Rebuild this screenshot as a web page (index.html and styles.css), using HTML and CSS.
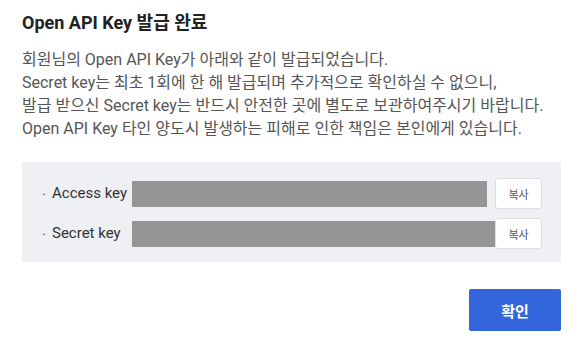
FILE: index.html
```html
<!DOCTYPE html>
<html lang="ko">
<head>
  <meta charset="UTF-8" />
  <title>Open API Key 발급 완료</title>
  <link rel="stylesheet" href="styles.css">
</head>
<body>
  <div class="modal">
    <h2>Open API Key 발급 완료</h2>
    <p class="desc">
      회원님의 Open API Key가 아래와 같이 발급되었습니다.<br>
      Secret key는 최초 1회에 한 해 발급되며 추가적으로 확인하실 수 없으니,<br>
      발급 받으신 Secret key는 반드시 안전한 곳에 별도로 보관하여주시기 바랍니다.<br>
      Open API Key 타인 양도시 발생하는 피해로 인한 책임은 본인에게 있습니다.
    </p>

    <div class="key-box">
      <div class="key-row">
        <span class="key-label">Access key</span>
        <div class="key-value"></div>
        <button type="button" class="btn-copy">복사</button>
      </div>
      <div class="key-row">
        <span class="key-label">Secret key</span>
        <div class="key-value wide"></div>
        <button type="button" class="btn-copy">복사</button>
      </div>
    </div>

    <div class="actions">
      <button type="button" class="btn-ok">확인</button>
    </div>
  </div>
</body>
</html>
```

FILE: styles.css
```css
body {
  margin: 0;
  background: #fff;
  font-family: Roboto, "Noto Sans CJK KR", sans-serif;
}
.modal {
  padding: 10px 19px 0 22px;
}
.modal h2 {
  margin: 0;
  font-size: 18px;
  line-height: 26px;
  font-weight: 700;
  color: #222;
}
.desc {
  margin: 12px 0 0;
  font-size: 16px;
  line-height: 23px;
  color: #555;
}
.key-box {
  margin-top: 22px;
  background: #eef0f3;
  padding: 16px 19px 13px 20px;
  display: flex;
  flex-direction: column;
  gap: 9px;
}
.key-row {
  display: flex;
  align-items: center;
  height: 31px;
}
.key-label {
  width: 90px;
  flex: none;
  font-size: 15px;
  color: #333;
}
.key-label::before {
  content: "·";
  display: inline-block;
  width: 10px;
  color: #555;
  vertical-align: -2px;
}
.key-value {
  flex: 1;
  height: 26px;
  background: #959595;
  margin-right: 8px;
}
.key-value.wide {
  margin-right: 0;
}
.btn-copy {
  flex: none;
  width: 47px;
  height: 31px;
  background: #fff;
  border: 1px solid #dcdde0;
  border-radius: 3px;
  font-family: inherit;
  font-size: 11px;
  color: #555;
  padding: 0;
}
.actions {
  margin-top: 27px;
  display: flex;
  justify-content: flex-end;
}
.btn-ok {
  width: 92px;
  height: 42px;
  background: #3366dd;
  color: #fff;
  border: none;
  border-radius: 2px;
  font-family: inherit;
  font-size: 15px;
  font-weight: 700;
}
```
